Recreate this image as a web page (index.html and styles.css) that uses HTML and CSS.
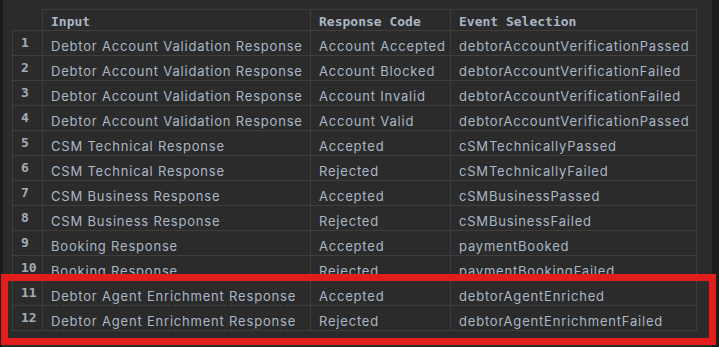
FILE: index.html
```html
<!DOCTYPE html>
<html lang="en">
<head>
    <meta charset="UTF-8">
    <title>Event Mapping</title>
    <link rel="stylesheet" href="styles.css">
</head>
<body>
    <div class="frame">
        <div class="edge left"></div>
        <div class="sheet">
            <table class="mapping">
                <colgroup>
                    <col class="c-num">
                    <col class="c-input">
                    <col class="c-code">
                    <col class="c-event">
                </colgroup>
                <thead>
                    <tr>
                        <th class="corner"></th>
                        <th>Input</th>
                        <th>Response Code</th>
                        <th>Event Selection</th>
                    </tr>
                </thead>
                <tbody>
                    <tr><td class="num">1</td><td>Debtor Account Validation Response</td><td>Account Accepted</td><td>debtorAccountVerificationPassed</td></tr>
                    <tr><td class="num">2</td><td>Debtor Account Validation Response</td><td>Account Blocked</td><td>debtorAccountVerificationFailed</td></tr>
                    <tr><td class="num">3</td><td>Debtor Account Validation Response</td><td>Account Invalid</td><td>debtorAccountVerificationFailed</td></tr>
                    <tr><td class="num">4</td><td>Debtor Account Validation Response</td><td>Account Valid</td><td>debtorAccountVerificationPassed</td></tr>
                    <tr><td class="num">5</td><td>CSM Technical Response</td><td>Accepted</td><td>cSMTechnicallyPassed</td></tr>
                    <tr><td class="num">6</td><td>CSM Technical Response</td><td>Rejected</td><td>cSMTechnicallyFailed</td></tr>
                    <tr><td class="num">7</td><td>CSM Business Response</td><td>Accepted</td><td>cSMBusinessPassed</td></tr>
                    <tr><td class="num">8</td><td>CSM Business Response</td><td>Rejected</td><td>cSMBusinessFailed</td></tr>
                    <tr><td class="num">9</td><td>Booking Response</td><td>Accepted</td><td>paymentBooked</td></tr>
                    <tr><td class="num">10</td><td>Booking Response</td><td>Rejected</td><td>paymentBookingFailed</td></tr>
                    <tr><td class="num">11</td><td><span class="typo">Debtor Agent Enrichment Response</span></td><td>Accepted</td><td>debtorAgentEnriched</td></tr>
                    <tr><td class="num">12</td><td><span class="typo">Debtor Agent Enrichment Response</span></td><td>Rejected</td><td>debtorAgentEnrichmentFailed</td></tr>
                </tbody>
            </table>
        </div>
        <div class="edge right"></div>
    </div>
    <div class="highlight"></div>
</body>
</html>
```

FILE: styles.css
```css
body {
    margin: 0;
    background-color: #2b2b2b;
    color: #a9b7c6;
    font-family: 'Inter', 'DejaVu Sans', sans-serif;
    font-size: 13px;
    height: 347px;
    overflow: hidden;
}

.frame {
    display: flex;
    height: 347px;
}

.edge {
    background-color: #1c1c1c;
}

.edge.left {
    width: 3px;
}

.edge.right {
    width: 7px;
}

.sheet {
    flex: 1;
    padding: 9px 0 0 9px;
}

.mapping {
    border-collapse: collapse;
    table-layout: fixed;
    width: 684px;
}

.c-num { width: 30px; }
.c-input { width: 268px; }
.c-code { width: 140px; }
.c-event { width: 246px; }

.mapping th,
.mapping td {
    border: 1px solid #3e3e3e;
    padding: 0 8px;
    text-align: left;
    vertical-align: top;
    white-space: nowrap;
    overflow: hidden;
    line-height: 16px;
    box-sizing: border-box;
}

.mapping th {
    height: 21px;
    padding-top: 4px;
    font-family: 'DejaVu Sans Mono', monospace;
    font-weight: bold;
    font-size: 13px;
}

.mapping th.corner {
    border-top-color: transparent;
    border-left-color: transparent;
    border-bottom-color: #3e3e3e;
}

.mapping td {
    height: 25px;
    padding-top: 7px;
    letter-spacing: 0.8px;
}

.mapping td.num {
    padding-top: 4px;
    font-family: 'DejaVu Sans Mono', monospace;
    font-weight: bold;
    letter-spacing: 0;
    color: #a4acb6;
}

.typo {
    text-decoration: underline wavy #e8474a;
    text-decoration-thickness: 1px;
    text-underline-offset: 3px;
}

.highlight {
    position: absolute;
    left: 1px;
    top: 274px;
    width: 701px;
    height: 57px;
    border: 7px solid #e31c1c;
}
```
